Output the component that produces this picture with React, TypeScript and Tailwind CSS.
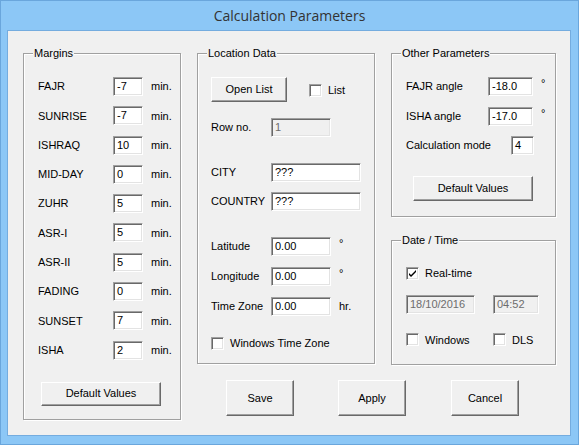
import React from 'react';

const font = "font-['Liberation_Sans',Arial,sans-serif] text-[11px] text-black";

const Group: React.FC<{ title: string; className: string; children: React.ReactNode }> = ({ title, className, children }) => (
    <div className={`relative border border-[#a0a0a0] shadow-[inset_1px_1px_0_#fff,1px_1px_0_#fff] ${className}`}>
        <span className="absolute -top-[7px] left-[9px] bg-[#f0f0f0] px-[1px] leading-[13px]">{title}</span>
        {children}
    </div>
);

const Field: React.FC<{ value: string; w: string; disabled?: boolean }> = ({ value, w, disabled }) => (
    <div
        className={`h-[19px] ${w} border border-t-[#a0a0a0] border-l-[#a0a0a0] border-b-white border-r-white shadow-[inset_1px_1px_0_#696969,inset_-1px_-1px_0_#e3e3e3] flex items-center pl-[3px] leading-none ${
            disabled ? 'bg-[#f0f0f0] text-[#6d6d6d]' : 'bg-white'
        }`}
    >
        {value}
    </div>
);

const Button: React.FC<{ label: string; className: string }> = ({ label, className }) => (
    <button
        className={`flex items-center justify-center bg-[#f0f0f0] border border-t-white border-l-white border-b-[#696969] border-r-[#696969] shadow-[inset_-1px_-1px_0_#a0a0a0] ${className}`}
    >
        {label}
    </button>
);

const Check: React.FC<{ label: string; checked?: boolean }> = ({ label, checked }) => (
    <div className="flex items-center gap-[6px]">
        <div className="w-[13px] h-[13px] bg-white border border-t-[#a0a0a0] border-l-[#a0a0a0] border-b-white border-r-white shadow-[inset_1px_1px_0_#696969,inset_-1px_-1px_0_#e3e3e3] flex items-center justify-center">
            {checked && (
                <svg width="9" height="9" viewBox="0 0 9 9">
                    <path d="M1 4 L3 6 L8 1 L8 3 L3 8 L1 6 Z" fill="#000" />
                </svg>
            )}
        </div>
        <span>{label}</span>
    </div>
);

const margins: [string, string][] = [
    ['FAJR', '-7'],
    ['SUNRISE', '-7'],
    ['ISHRAQ', '10'],
    ['MID-DAY', '0'],
    ['ZUHR', '5'],
    ['ASR-I', '5'],
    ['ASR-II', '5'],
    ['FADING', '0'],
    ['SUNSET', '7'],
    ['ISHA', '2'],
];

export default function App() {
    return (
        <div className="w-[579px] h-[445px] bg-[#8cc7f6] border border-[#6aa6dc] flex flex-col">
            {/* Title bar */}
            <div className="h-[29px] flex items-center justify-center font-['Open_Sans',sans-serif] text-[14px] text-[#333]">
                Calculation Parameters
            </div>

            {/* Client area */}
            <div className={`ml-[6px] mr-[7px] h-[406px] bg-[#f0f0f0] border border-[#74acdf] flex pl-[15px] pt-[22px] ${font}`}>
                {/* Margins */}
                <Group title="Margins" className="w-[158px] h-[367px] pt-[23px] pl-[14px]">
                    <div className="flex flex-col gap-[10.3px]">
                        {margins.map(([name, val]) => (
                            <div key={name} className="flex items-center">
                                <span className="w-[75px]">{name}</span>
                                <Field value={val} w="w-[30px]" />
                                <span className="ml-[8px]">min.</span>
                            </div>
                        ))}
                    </div>
                    <Button label="Default Values" className="mt-[22px] ml-[3px] w-[120px] h-[24px]" />
                </Group>

                <div className="ml-[16px] flex flex-col">
                    <div className="flex items-start">
                        {/* Location Data */}
                        <Group title="Location Data" className="w-[178px] h-[311px] pt-[23px] pl-[13px]">
                            <div className="flex items-center">
                                <Button label="Open List" className="w-[76px] h-[25px]" />
                                <div className="ml-[22px] mt-[1px]">
                                    <Check label="List" />
                                </div>
                            </div>
                            <div className="flex items-center mt-[16px]">
                                <span className="w-[60px]">Row no.</span>
                                <Field value="1" w="w-[60px]" disabled />
                            </div>
                            <div className="flex items-center mt-[26px]">
                                <span className="w-[60px]">CITY</span>
                                <Field value="???" w="w-[90px]" />
                            </div>
                            <div className="flex items-center mt-[10px]">
                                <span className="w-[60px]">COUNTRY</span>
                                <Field value="???" w="w-[90px]" />
                            </div>
                            <div className="flex flex-col gap-[11px] mt-[26px]">
                                {[
                                    ['Latitude', '°'],
                                    ['Longitude', '°'],
                                    ['Time Zone', 'hr.'],
                                ].map(([l, u]) => (
                                    <div key={l} className="flex items-center">
                                        <span className="w-[60px]">{l}</span>
                                        <Field value="0.00" w="w-[60px]" />
                                        <span className={`ml-[8px] ${u === '°' ? 'self-start -mt-[2px]' : ''}`}>{u}</span>
                                    </div>
                                ))}
                            </div>
                            <div className="mt-[19px]">
                                <Check label="Windows Time Zone" />
                            </div>
                        </Group>

                        {/* Right column */}
                        <div className="ml-[16px] flex flex-col">
                            <Group title="Other Parameters" className="w-[165px] h-[164px] pt-[23px] pl-[14px]">
                                <div className="flex items-center">
                                    <span className="w-[82px]">FAJR angle</span>
                                    <Field value="-18.0" w="w-[45px]" />
                                    <span className="ml-[8px] self-start -mt-[2px]">°</span>
                                </div>
                                <div className="flex items-center mt-[11px]">
                                    <span className="w-[82px]">ISHA angle</span>
                                    <Field value="-17.0" w="w-[45px]" />
                                    <span className="ml-[8px] self-start -mt-[2px]">°</span>
                                </div>
                                <div className="flex items-center mt-[10px]">
                                    <span className="w-[105px]">Calculation mode</span>
                                    <Field value="4" w="w-[23px]" />
                                </div>
                                <Button label="Default Values" className="mt-[21px] ml-[7px] w-[120px] h-[25px]" />
                            </Group>

                            <Group title="Date / Time" className="mt-[23px] w-[165px] h-[125px] pt-[24px] pl-[14px]">
                                <Check label="Real-time" checked />
                                <div className="flex items-center mt-[13px]">
                                    <Field value="18/10/2016" w="w-[69px]" disabled />
                                    <div className="ml-[18px]">
                                        <Field value="04:52" w="w-[46px]" disabled />
                                    </div>
                                </div>
                                <div className="flex items-center mt-[18px]">
                                    <div className="w-[87px]">
                                        <Check label="Windows" />
                                    </div>
                                    <Check label="DLS" />
                                </div>
                            </Group>
                        </div>
                    </div>

                    {/* Dialog buttons */}
                    <div className="flex mt-[15px] pl-[29px]">
                        <Button label="Save" className="w-[68px] h-[36px]" />
                        <Button label="Apply" className="ml-[44px] w-[68px] h-[36px]" />
                        <Button label="Cancel" className="ml-[45px] w-[68px] h-[36px]" />
                    </div>
                </div>
            </div>
        </div>
    );
}
